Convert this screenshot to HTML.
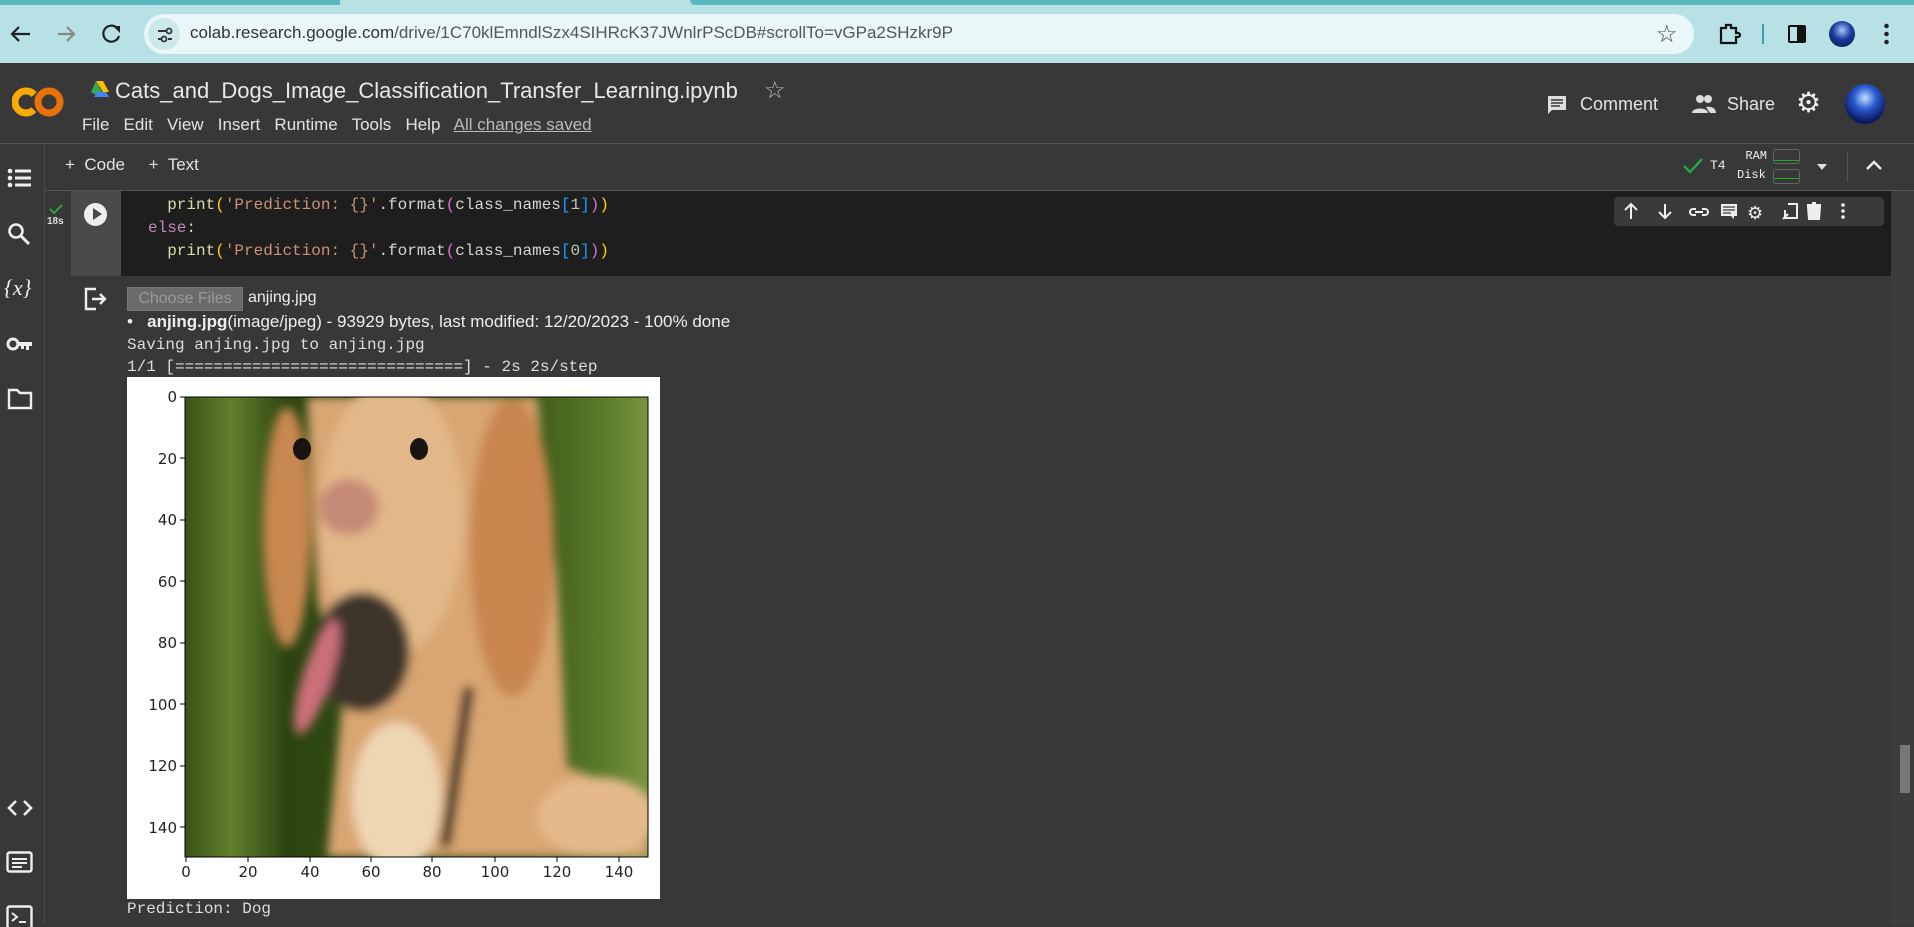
<!DOCTYPE html>
<html><head><meta charset="utf-8"><style>
*{margin:0;padding:0;box-sizing:border-box}
body{width:1914px;height:925px;overflow:hidden;background:#383838;font-family:"Liberation Sans",sans-serif;position:relative;color:#e3e3e3}
.a{position:absolute}
.mono{font-family:"Liberation Mono",monospace}
</style></head><body>
<div class="a" style="left:0;top:0;width:1914px;height:63px;background:#b8e1e5"></div>
<div class="a" style="left:0;top:0;width:340px;height:5px;background:#5ab8c0"></div>
<div class="a" style="left:690px;top:0;width:1224px;height:5px;background:#5ab8c0;border-radius:0 0 0 8px"></div>
<div class="a" style="left:144px;top:14px;width:1550px;height:40px;background:#eaf7f8;border-radius:20px"></div>
<div class="a" style="left:148px;top:18px;width:32px;height:32px;background:#cde8ea;border-radius:16px"></div>
<svg class="a" style="left:0;top:14px" width="140" height="40"><path d="M30 20H12M19 13l-7 7 7 7" stroke="#222" stroke-width="2.2" fill="none"/><path d="M58 20h16M67 13l7 7-7 7" stroke="#888" stroke-width="2.2" fill="none"/><path d="M117 14a8 8 0 1 0 2 8" stroke="#222" stroke-width="2.2" fill="none"/><path d="M113 12h7v7z" fill="#222"/></svg>
<svg class="a" style="left:156px;top:26px" width="18" height="18"><path d="M2 5h8M2 13h4M12 13h4" stroke="#333" stroke-width="2"/><circle cx="13" cy="5" r="2.5" stroke="#333" stroke-width="1.8" fill="none"/><circle cx="8" cy="13" r="2.5" stroke="#333" stroke-width="1.8" fill="none"/></svg>
<div class="a" style="left:190px;top:23px;font-size:17px;color:#333">colab.research.google.com<span style="color:#555">/drive/1C70klEmndlSzx4SIHRcK37JWnlrPScDB#scrollTo=vGPa2SHzkr9P</span></div>
<div class="a" style="left:1656px;top:20px;font-size:24px;color:#444">☆</div>
<svg class="a" style="left:1718px;top:22px" width="24" height="24"><path d="M3 6h5V3h5v3h5v5h2a2 2 0 0 1 0 4h-2v6H3z" stroke="#111" stroke-width="2.2" fill="none"/></svg>
<div class="a" style="left:1762px;top:24px;width:2px;height:20px;background:#3aa0aa"></div>
<div class="a" style="left:1788px;top:25px;width:18px;height:18px;border:2.5px solid #111;border-radius:2px"><div style="position:absolute;right:0;top:0;width:7px;height:14px;background:#111"></div></div>
<div class="a" style="left:1829px;top:21px;width:26px;height:26px;border-radius:13px;background:radial-gradient(circle at 50% 35%,#a0c8ff,#1a3a9a 45%,#0a1445)"></div>
<div class="a" style="left:1884px;top:22px;width:5px;height:24px;background:radial-gradient(circle,#222 2px,transparent 2.5px) 0 0/5px 8px"></div>
<div class="a" style="left:0;top:63px;width:1914px;height:81px;background:#383838;border-bottom:1px solid #555"></div>
<svg class="a" style="left:12px;top:84px" width="52" height="36"><circle cx="14" cy="18" r="11" stroke="#f9ab00" stroke-width="7" fill="none" stroke-dasharray="52 20" transform="rotate(45 14 18)"/><circle cx="37" cy="18" r="11" stroke="#e8710a" stroke-width="7" fill="none"/></svg>
<svg class="a" style="left:90px;top:80px" width="20" height="18"><path d="M6 1h7l6 11H13z" fill="#fbbc04"/><path d="M6 1l6 11-3 5L1 12z" fill="#34a853"/><path d="M4 17h15l-3-5H7z" fill="#4285f4"/></svg>
<div class="a" style="left:115px;top:78px;font-size:22px;color:#e8e8e8">Cats_and_Dogs_Image_Classification_Transfer_Learning.ipynb</div>
<div class="a" style="left:764px;top:76px;font-size:24px;color:#bbb">☆</div>
<div class="a" style="left:82px;top:115px;font-size:17px;color:#e3e3e3">File&nbsp;&nbsp; Edit&nbsp;&nbsp; View&nbsp;&nbsp; Insert&nbsp;&nbsp; Runtime&nbsp;&nbsp; Tools&nbsp;&nbsp; Help&nbsp;&nbsp; <span style="color:#bbb;text-decoration:underline">All changes saved</span></div>
<svg class="a" style="left:1546px;top:94px" width="22" height="22"><path d="M2 2h18v14H6l-4 4z" fill="#ddd"/><path d="M5 6h12M5 9h12M5 12h9" stroke="#383838" stroke-width="1.5"/></svg>
<div class="a" style="left:1580px;top:94px;font-size:18px">Comment</div>
<svg class="a" style="left:1692px;top:94px" width="24" height="20"><circle cx="8" cy="5" r="4" fill="#ddd"/><circle cx="16" cy="5" r="4" fill="#ddd"/><path d="M0 19c0-6 16-6 16 0zM14 13c5-1 10 1 10 6h-6z" fill="#ddd"/></svg>
<div class="a" style="left:1727px;top:94px;font-size:18px">Share</div>
<div class="a" style="left:1796px;top:88px;font-size:28px;color:#eee;line-height:30px">⚙</div>
<div class="a" style="left:1845px;top:84px;width:40px;height:40px;border-radius:20px;background:radial-gradient(circle at 50% 35%,#c0dcff,#2a5ad0 35%,#0c1c66 70%,#050a30)"></div>
<div class="a" style="left:65px;top:155px;font-size:17px">+&nbsp; Code&nbsp;&nbsp;&nbsp;&nbsp; +&nbsp; Text</div>
<svg class="a" style="left:1682px;top:156px" width="22" height="20"><path d="M2 10l6 6L20 3" stroke="#22b04a" stroke-width="2.2" fill="none"/></svg>
<div class="a mono" style="left:1710px;top:158px;font-size:13px;color:#eee">T4</div>
<div class="a mono" style="left:1745px;top:149px;font-size:12px;color:#eee;text-align:right;width:22px">RAM</div>
<div class="a mono" style="left:1737px;top:168px;font-size:12px;color:#eee">Disk</div>
<div class="a" style="left:1773px;top:149px;width:27px;height:15px;border:1px solid #666;border-radius:3px"><div style="position:absolute;left:0;right:0;bottom:2px;height:1px;background:#2a2"></div></div>
<div class="a" style="left:1773px;top:169px;width:27px;height:15px;border:1px solid #666;border-radius:3px"><div style="position:absolute;left:0;right:0;bottom:4px;height:1px;background:#2a2"></div></div>
<div class="a" style="left:1817px;top:164px;border:5px solid transparent;border-top:6px solid #ddd"></div>
<div class="a" style="left:1847px;top:152px;width:1px;height:30px;background:#555"></div>
<svg class="a" style="left:1865px;top:158px" width="18" height="14"><path d="M2 11l7-7 7 7" stroke="#eee" stroke-width="2.4" fill="none"/></svg>
<div class="a" style="left:44px;top:190px;width:1870px;height:1px;background:#555"></div>
<div class="a" style="left:44px;top:144px;width:1px;height:781px;background:#4a4a4a"></div>
<svg class="a" style="left:7px;top:168px" width="26" height="22"><g fill="#eee"><circle cx="3" cy="3" r="2.3"/><circle cx="3" cy="10" r="2.3"/><circle cx="3" cy="17" r="2.3"/><rect x="8" y="1.5" width="16" height="3"/><rect x="8" y="8.5" width="16" height="3"/><rect x="8" y="15.5" width="16" height="3"/></g></svg>
<svg class="a" style="left:7px;top:222px" width="26" height="26"><circle cx="9" cy="9" r="6.5" stroke="#eee" stroke-width="2.6" fill="none"/><path d="M14 14l8 8" stroke="#eee" stroke-width="3"/></svg>
<div class="a" style="left:4px;top:275px;font-size:22px;font-family:'Liberation Serif',serif;font-style:italic;color:#eee">{<i>x</i>}</div>
<svg class="a" style="left:6px;top:336px" width="28" height="16"><circle cx="7" cy="8" r="5" stroke="#eee" stroke-width="3" fill="none"/><path d="M12 6h14v4h-3v4h-3v-4h-2v3h-3v-3h-3z" fill="#eee"/></svg>
<svg class="a" style="left:7px;top:388px" width="26" height="22"><path d="M2 2h8l3 3h11v15H2z" stroke="#eee" stroke-width="2.4" fill="none"/></svg>
<svg class="a" style="left:6px;top:798px" width="28" height="20"><path d="M10 3l-7 7 7 7M18 3l7 7-7 7" stroke="#eee" stroke-width="2.6" fill="none"/></svg>
<svg class="a" style="left:6px;top:851px" width="28" height="22"><rect x="1.5" y="1.5" width="24" height="19" rx="2" stroke="#eee" stroke-width="2.4" fill="none"/><path d="M6 8h15M6 12h15M6 16h10" stroke="#eee" stroke-width="2"/></svg>
<svg class="a" style="left:6px;top:905px" width="28" height="22"><rect x="1.5" y="1.5" width="24" height="22" rx="2" stroke="#eee" stroke-width="2.4" fill="none"/><path d="M6 8l5 4-5 4M13 17h7" stroke="#eee" stroke-width="2" fill="none"/></svg>
<div class="a" style="left:71px;top:191px;width:50px;height:85px;background:#4a4a4a"></div>
<div class="a" style="left:121px;top:191px;width:1770px;height:85px;background:#1e1e1e"></div>
<svg class="a" style="left:49px;top:203px" width="14" height="12"><path d="M1 6l4 4 8-8" stroke="#22b04a" stroke-width="1.8" fill="none"/></svg>
<div class="a" style="left:47px;top:216px;font-size:10px;font-weight:bold;color:#ddd">18s</div>
<div class="a" style="left:84px;top:203px;width:23px;height:23px;border-radius:12px;background:#eee"></div>
<div class="a" style="left:93px;top:208px;border:6.5px solid transparent;border-left:9px solid #4a4a4a;border-right:0"></div>
<div class="a mono" style="left:148px;top:194px;font-size:16px;line-height:23px;color:#d4d4d4;white-space:pre">  <span style="color:#dcdcaa">print</span><span style="color:#ffd700">(</span><span style="color:#ce9178">'Prediction: {}'</span>.format<span style="color:#da70d6">(</span>class_names<span style="color:#179fff">[</span><span style="color:#b5cea8">1</span><span style="color:#179fff">]</span><span style="color:#da70d6">)</span><span style="color:#ffd700">)</span>
<span style="color:#c586c0">else</span>:
  <span style="color:#dcdcaa">print</span><span style="color:#ffd700">(</span><span style="color:#ce9178">'Prediction: {}'</span>.format<span style="color:#da70d6">(</span>class_names<span style="color:#179fff">[</span><span style="color:#b5cea8">0</span><span style="color:#179fff">]</span><span style="color:#da70d6">)</span><span style="color:#ffd700">)</span></div>
<div class="a" style="left:1614px;top:197px;width:270px;height:29px;background:#3a3a3a;border-radius:4px"></div>
<svg class="a" style="left:1614px;top:197px" width="270" height="29"><g stroke="#eee" stroke-width="2" fill="none"><path d="M17 22V8M11 13l6-6 6 6"/><path d="M51 7v14M45 15l6 6 6-6"/><path d="M82 12h-3a3 3 0 0 0 0 6h3M88 12h3a3 3 0 0 1 0 6h-3M81 15h8"/><path d="M174 7h9v14h-12v-8"/><path d="M169 22l5-5"/></g><path d="M107 7h16v12h-3v3l-3-3h-10z" fill="#eee"/><path d="M109 10h12M109 13h12M109 16h8" stroke="#3a3a3a" stroke-width="1.3"/><text x="133" y="22" font-size="18" fill="#eee" font-family="DejaVu Sans">⚙</text><path d="M194 10h12l-1 12h-10zM193 8h14M198 6h4" stroke="#eee" stroke-width="2" fill="#eee"/><g fill="#eee"><circle cx="229" cy="8" r="1.8"/><circle cx="229" cy="14" r="1.8"/><circle cx="229" cy="20" r="1.8"/></g></svg>
<div class="a" style="left:1891px;top:191px;width:23px;height:734px;background:#3c3c3c"></div>
<div class="a" style="left:1900px;top:745px;width:10px;height:48px;background:#777"></div>
<svg class="a" style="left:83px;top:286px" width="26" height="26"><path d="M13 3H3v20h10" stroke="#eee" stroke-width="2.4" fill="none"/><path d="M9 13h13M17 8l5 5-5 5" stroke="#eee" stroke-width="2.4" fill="none"/></svg>
<div class="a" style="left:127px;top:287px;width:116px;height:24px;background:#6b6b6b;border:1px solid #777;font-size:16px;color:#999;text-align:center;line-height:22px">Choose Files</div>
<div class="a" style="left:248px;top:289px;font-size:16px;color:#eee">anjing.jpg</div>
<div class="a" style="left:127px;top:312px;font-size:17px;color:#eee">•&nbsp;&nbsp;&nbsp;<b>anjing.jpg</b>(image/jpeg) - 93929 bytes, last modified: 12/20/2023 - 100% done</div>
<div class="a mono" style="left:127px;top:334px;font-size:16px;line-height:22px;color:#ddd;white-space:pre">Saving anjing.jpg to anjing.jpg
1/1 [==============================] - 2s 2s/step</div>
<svg class="a" style="left:127px;top:377px" width="533" height="522">
<rect width="533" height="522" fill="#fff"/>
<defs>
<filter id="b"><feGaussianBlur stdDeviation="14"/></filter>
<filter id="s"><feGaussianBlur stdDeviation="5"/></filter>
<clipPath id="c"><rect x="58" y="20" width="463" height="460"/></clipPath>
<linearGradient id="g" x1="0" x2="1"><stop offset="0" stop-color="#3a5218"/><stop offset=".1" stop-color="#62802e"/><stop offset=".22" stop-color="#2c4410"/><stop offset=".75" stop-color="#3c5a18"/><stop offset=".9" stop-color="#5a7a28"/><stop offset="1" stop-color="#7a9440"/></linearGradient>
</defs>
<g clip-path="url(#c)">
<rect x="58" y="20" width="463" height="460" fill="url(#g)"/>
<g filter="url(#s)">
<path d="M200 480L215 330 190 220 180 20H410L430 200 440 390 521 420V480Z" fill="#d9a672"/>
<ellipse cx="160" cy="150" rx="24" ry="120" fill="#c8884f"/>
<ellipse cx="265" cy="140" rx="72" ry="140" fill="#e2b888"/>
<ellipse cx="385" cy="170" rx="42" ry="150" fill="#c98650"/>
<ellipse cx="222" cy="130" rx="30" ry="28" fill="#c68a78"/>
<ellipse cx="235" cy="275" rx="48" ry="60" fill="#3c342c"/>
<ellipse cx="190" cy="300" rx="14" ry="60" fill="#cc6f7a" transform="rotate(18 190 300)"/>
<path d="M342 310L318 470" stroke="#2a2018" stroke-width="11"/>
<ellipse cx="270" cy="420" rx="45" ry="75" fill="#efd6b2"/>
<ellipse cx="470" cy="440" rx="60" ry="40" fill="#e5b98a"/>
</g>
<ellipse cx="175" cy="72" rx="9" ry="11" fill="#1a1410"/>
<ellipse cx="292" cy="72" rx="9" ry="11" fill="#1a1410"/>
</g>
<rect x="58" y="20" width="463" height="460" fill="none" stroke="#000" stroke-width="1"/>
<g font-family="DejaVu Sans" font-size="15" fill="#222" text-anchor="end">
<text x="50" y="25">0</text><text x="50" y="87">20</text><text x="50" y="148">40</text><text x="50" y="210">60</text><text x="50" y="271">80</text><text x="50" y="333">100</text><text x="50" y="394">120</text><text x="50" y="456">140</text></g>
<g font-family="DejaVu Sans" font-size="15" fill="#222" text-anchor="middle">
<text x="59" y="500">0</text><text x="121" y="500">20</text><text x="183" y="500">40</text><text x="244" y="500">60</text><text x="305" y="500">80</text><text x="368" y="500">100</text><text x="430" y="500">120</text><text x="492" y="500">140</text></g>
<g stroke="#000" stroke-width="1"><path d="M53 20h5M53 81h5M53 143h5M53 204h5M53 266h5M53 327h5M53 389h5M53 450h5M59 480v5M121 480v5M183 480v5M244 480v5M305 480v5M368 480v5M430 480v5M492 480v5"/></g>
</svg>
<div class="a mono" style="left:127px;top:900px;font-size:16px;color:#ddd">Prediction: Dog</div>
</body></html>
